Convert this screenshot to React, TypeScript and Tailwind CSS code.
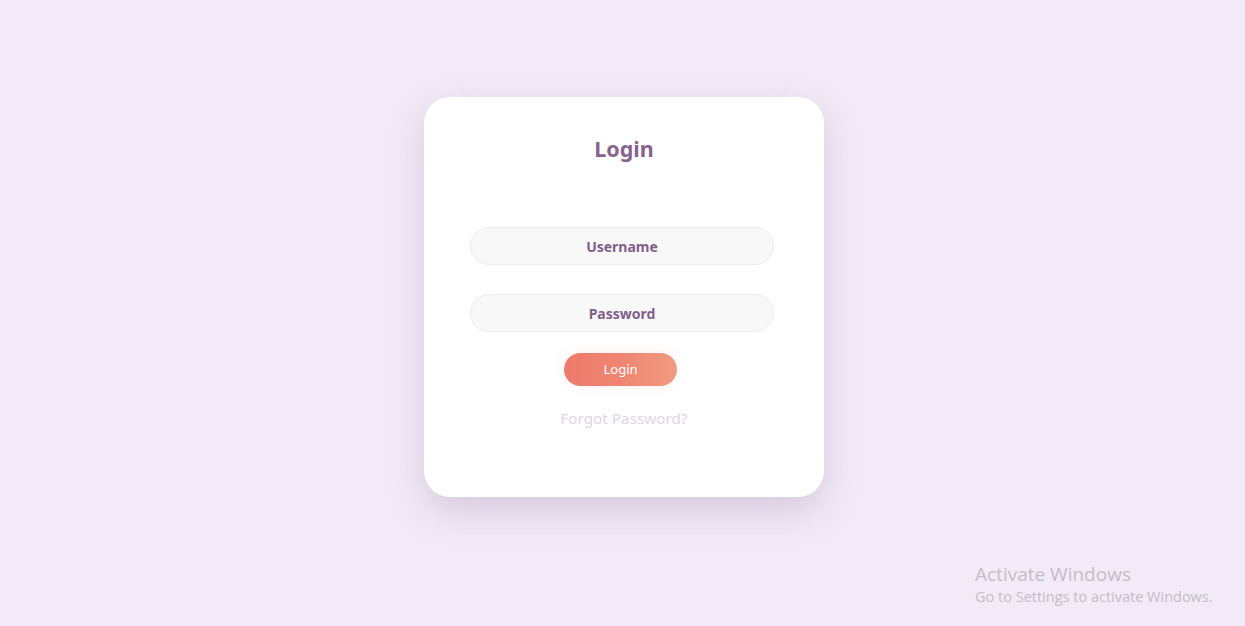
export default function App() {
  return (
    <div
      className="relative min-h-screen w-full bg-[#f2eaf6] flex justify-center pt-[97px] pl-[3px]"
      style={{ fontFamily: '"Noto Sans", "Open Sans", sans-serif' }}
    >
      <div className="w-[400px] h-[400px] bg-white rounded-[26px] shadow-[0_14px_34px_rgba(150,120,160,0.28)] flex flex-col items-center pt-[36px]">
        <h1 className="text-[21.5px] leading-[32px] font-bold text-[#86648f]">Login</h1>

        <div className="mt-[62px] mr-[4px] w-[304px] h-[38px] rounded-full bg-[#f9f8f9] border border-[#efe9f1] flex items-center justify-center">
          <span className="text-[14px] font-bold text-[#7f5f8a]">Username</span>
        </div>

        <div className="mt-[29px] mr-[4px] w-[304px] h-[38px] rounded-full bg-[#f9f8f9] border border-[#efe9f1] flex items-center justify-center">
          <span className="text-[14px] font-bold text-[#7f5f8a]">Password</span>
        </div>

        <button className="mt-[21px] mr-[7px] w-[113px] h-[33px] rounded-full bg-gradient-to-r from-[#ef7a6c] via-[#ef8571] to-[#f09c80] text-white text-[13px] shadow-[0_0_14px_rgba(240,140,120,0.12)]">
          Login
        </button>

        <div className="mt-[20px] text-[15.3px] leading-[24px] text-[#e2d3e7]">Forgot Password?</div>
      </div>

      <div
        className="absolute left-[975px] top-[561px] text-[#c5bcc9]"
        style={{ fontFamily: '"Open Sans", "Noto Sans", sans-serif' }}
      >
        <div className="text-[19px] leading-[26px]">Activate Windows</div>
        <div className="text-[14.5px] leading-[20px]">Go to Settings to activate Windows.</div>
      </div>
    </div>
  );
}
